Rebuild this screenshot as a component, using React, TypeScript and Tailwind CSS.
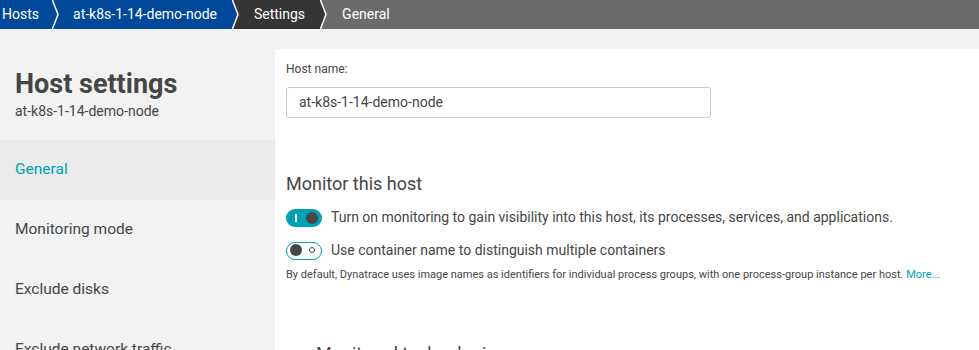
const crumbs = [
  { label: "Hosts", bg: "bg-[#00489a]", fill: "#00489a", pad: "pl-[2px] pr-[13px]" },
  { label: "at-k8s-1-14-demo-node", bg: "bg-[#00489a]", fill: "#00489a", pad: "pl-[13px] pr-[15px]" },
  { label: "Settings", bg: "bg-[#353535]", fill: "#353535", pad: "pl-[14px] pr-[15px]" },
];

const navItems = ["General", "Monitoring mode", "Exclude disks", "Exclude network traffic"];

function Chevron({ fill, next }: { fill: string; next: string }) {
  return (
    <svg width="8" height="29" viewBox="0 0 8 29" style={{ background: next }} className="shrink-0">
      <polygon points="0,0 6,14.5 0,29" fill={fill} />
      <polyline points="0,-1 6,14.5 0,30" fill="none" stroke="#fff" strokeWidth="1.5" />
    </svg>
  );
}

function Breadcrumbs() {
  const colors = ["#00489a", "#00489a", "#353535", "#6b6b6b"];
  return (
    <nav className="flex h-[29px] w-full bg-[#6b6b6b] text-[14px] leading-[29px] text-white">
      {crumbs.map((crumb, i) => (
        <div key={crumb.label} className="flex">
          <span className={`${crumb.bg} ${crumb.pad} whitespace-nowrap`}>{crumb.label}</span>
          <Chevron fill={crumb.fill} next={colors[i + 1]} />
        </div>
      ))}
      <span className="pl-[14px]">General</span>
    </nav>
  );
}

function Toggle({ on }: { on: boolean }) {
  if (on) {
    return (
      <div className="relative h-[18px] w-[36px] shrink-0 rounded-full bg-[#00a1b2]">
        <span className="absolute left-[9px] top-[5px] h-[8px] w-[2px] bg-white" />
        <span className="absolute right-[4px] top-[3px] h-[12px] w-[12px] rounded-full bg-[#454646]" />
      </div>
    );
  }
  return (
    <div className="relative h-[18px] w-[36px] shrink-0 rounded-full border-[1.5px] border-[#00a1b2] bg-white">
      <span className="absolute left-[3px] top-[1.5px] h-[12px] w-[12px] rounded-full bg-[#454646]" />
      <span className="absolute right-[6px] top-[4.5px] h-[6px] w-[6px] rounded-full border border-[#454646]" />
    </div>
  );
}

export default function App() {
  return (
    <div
      className="h-[350px] w-[979px] overflow-hidden bg-[#f2f2f2] text-[#454646]"
      style={{ fontFamily: "Roboto, 'Noto Sans', sans-serif" }}
    >
      <Breadcrumbs />
      <div className="flex pt-[20px]">
        <aside className="w-[275px] shrink-0">
          <div className="pl-[15px] pt-[19px]">
            <h1 className="text-[27px] font-bold leading-[32px]">Host settings</h1>
            <p className="mt-[2px] text-[14px] leading-[18px]">at-k8s-1-14-demo-node</p>
          </div>
          <ul className="mt-[20px]">
            {navItems.map((item, i) => (
              <li
                key={item}
                className={`flex h-[60px] items-center pl-[15px] text-[15.5px] ${
                  i === 0 ? "bg-[#ebebeb] text-[#00a1b2]" : ""
                }`}
              >
                {item}
              </li>
            ))}
          </ul>
        </aside>

        <main className="h-[330px] flex-1 rounded-tl-[3px] bg-white pl-[11px] pt-[12px]">
          <label className="block text-[12px] leading-[16px]">Host name:</label>
          <div className="mt-[10px] flex h-[31px] w-[425px] items-center rounded-[3px] border border-[#cccccc] pl-[12px] text-[14px]">
            at-k8s-1-14-demo-node
          </div>

          <h2 className="mt-[54px] text-[18px] leading-[24px]">Monitor this host</h2>
          <div className="mt-[11px] flex flex-col gap-[12px]">
            <div className="flex items-center gap-[9px] text-[14px]">
              <Toggle on />
              <span>Turn on monitoring to gain visibility into this host, its processes, services, and applications.</span>
            </div>
            <div className="flex items-center gap-[9px] text-[14px]">
              <Toggle on={false} />
              <span>Use container name to distinguish multiple containers</span>
            </div>
          </div>
          <p className="mt-[7px] text-[11px] leading-[14px]">
            By default, Dynatrace uses image names as identifiers for individual process groups, with one
            process-group instance per host. <span className="text-[#00a1b2]">More...</span>
          </p>

          <h2 className="mt-[60px] pl-[30px] text-[18px] leading-[24px]">Monitored technologies</h2>
        </main>
      </div>
    </div>
  );
}
